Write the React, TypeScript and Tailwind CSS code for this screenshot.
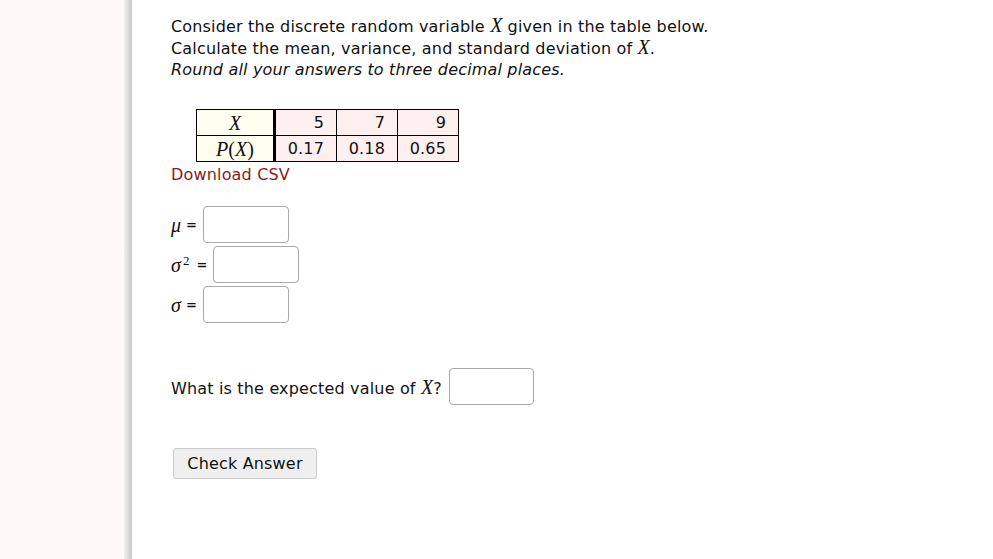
import React from "react";

const M = ({ children, className = "" }: { children: React.ReactNode; className?: string }) => (
  <span className={`italic text-[20px] tracking-normal ${className}`} style={{ fontFamily: '"Liberation Serif", serif' }}>
    {children}
  </span>
);

const td = "h-[26px] border border-black bg-[#fff0f0] p-0 pr-[12px] text-right leading-none";
const th = "h-[26px] border border-black border-r-[3px] bg-[#fffff0] p-0 text-center leading-none";

export default function App() {
  return (
    <div className="flex min-h-[559px] w-[993px] bg-white text-[16px] tracking-[0.17px] text-[#111]" style={{ fontFamily: '"DejaVu Sans", sans-serif' }}>
      <div className="w-[124px] shrink-0 bg-[#fff8f8]" />
      <div className="w-[8px] shrink-0 bg-gradient-to-r from-[#f4f0f0] to-[#c8c8c8]" />
      <div className="flex-1 pl-[39px] pt-[15px]">
        <div className="leading-[21px]">
          <div>
            Consider the discrete random variable <M>X</M> given in the table below.
          </div>
          <div>
            Calculate the mean, variance, and standard deviation of <M>X</M>.
          </div>
          <div className="italic">Round all your answers to three decimal places.</div>
        </div>

        <table className="ml-[25px] mt-[29px] border-collapse text-[16px]">
          <tbody>
            <tr>
              <td className={`w-[78px] ${th}`}>
                <M>X</M>
              </td>
              <td className={`w-[62px] ${td}`}>5</td>
              <td className={`w-[61px] ${td}`}>7</td>
              <td className={`w-[61px] ${td}`}>9</td>
            </tr>
            <tr>
              <td className={th}>
                <M>
                  P<span className="not-italic">(</span>X<span className="not-italic">)</span>
                </M>
              </td>
              <td className={td}>0.17</td>
              <td className={td}>0.18</td>
              <td className={td}>0.65</td>
            </tr>
          </tbody>
        </table>
        <div className="mt-[1px] text-[#8b1a1a]">Download CSV</div>

        <div className="mt-[19px] flex flex-col gap-[3px]">
          <div className="flex items-center">
            <M>μ</M>
            <span className="ml-[5px] mr-[6px] text-[13px] font-bold">=</span>
            <div className="h-[37px] w-[86px] rounded-[4px] border border-[#aaa] bg-white" />
          </div>
          <div className="flex items-center">
            <M>
              σ<sup className="ml-[2px] not-italic text-[13px]">2</sup>
            </M>
            <span className="ml-[7px] mr-[6px] text-[13px] font-bold">=</span>
            <div className="h-[37px] w-[86px] rounded-[4px] border border-[#aaa] bg-white" />
          </div>
          <div className="flex items-center">
            <M>σ</M>
            <span className="ml-[5px] mr-[6px] text-[13px] font-bold">=</span>
            <div className="h-[37px] w-[86px] rounded-[4px] border border-[#aaa] bg-white" />
          </div>
        </div>

        <div className="mt-[45px] flex items-center">
          <span>
            What is the expected value of <M>X</M>?
          </span>
          <div className="ml-[7px] h-[37px] w-[85px] rounded-[4px] border border-[#aaa] bg-white" />
        </div>

        <button className="ml-[2px] mt-[43px] h-[31px] w-[144px] rounded-[3px] border border-[#ccc] bg-[#efefef] text-[16px] leading-none text-[#111]">
          Check Answer
        </button>
      </div>
    </div>
  );
}
